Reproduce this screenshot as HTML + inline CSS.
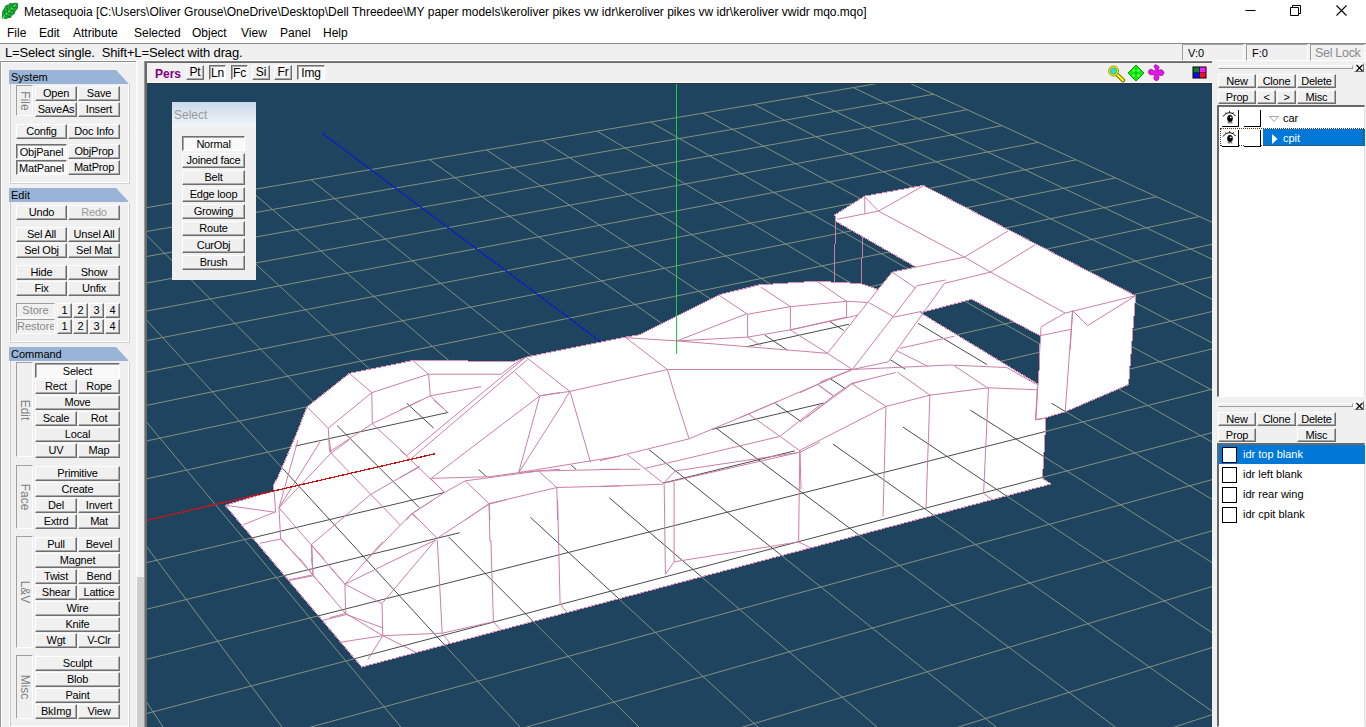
<!DOCTYPE html>
<html><head><meta charset="utf-8"><title>Metasequoia</title>
<style>
*{box-sizing:border-box}
html,body{margin:0;padding:0}
body{width:1366px;height:727px;overflow:hidden;background:#f0f0f0;font-family:"Liberation Sans",sans-serif;font-size:11px;color:#000;position:relative}
#title{position:absolute;left:0;top:0;width:1366px;height:23px;background:#fff}
#leaf{position:absolute;left:0px;top:0px}
#ttext{position:absolute;left:24px;top:5px;font-size:12px;white-space:nowrap;letter-spacing:0px}
#wc{position:absolute;left:1226px;top:0}
#menu{position:absolute;left:0;top:23px;width:1366px;height:20px;background:#fff;font-size:12px}
#menu span{position:absolute;top:3px}
#status{position:absolute;left:0;top:43px;width:1366px;height:18px;background:#f0f0f0;border-top:1px solid #8a8a8a;border-bottom:1px solid #fff;font-size:12px}
#stext{position:absolute;left:5px;top:1px;white-space:nowrap;font-size:13px;letter-spacing:-0.15px}
.sb{position:absolute;top:0px;height:17px;white-space:nowrap;overflow:hidden;border:1px solid;border-color:#a0a0a0 #fff #fff #a0a0a0;padding:2px 0 0 5px;font-size:11px}
#left{position:absolute;left:0;top:0;width:144px;height:727px}
.edgeL{position:absolute;left:0;top:61px;width:144px;height:666px;border-left:1px solid #9a9a9a;border-top:1px solid #8a8a8a;box-shadow:inset 1px 1px 0 #fff}
.hd{position:absolute;left:9px;width:120px;height:14px;background:#99b4d6;clip-path:polygon(0 0,107px 0,120px 14px,0 14px);font-size:11px;line-height:14px;padding-left:2px}
.grp{position:absolute;left:9px;width:120px;border:1px solid #fff;border-top:none;box-shadow:inset 1px 0 0 #c8c8c8, 1px 1px 0 #d0d0d0;background:#f0f0f0}
.vl{position:absolute;left:16px;width:17px;border:1px solid;border-color:#a0a0a0 #fff #fff #a0a0a0;color:#808080}
.vl span{position:absolute;left:50%;top:50%;transform:translate(-50%,-50%) rotate(90deg);white-space:nowrap;font-size:12px}
.b{position:absolute;background:#f0f0f0;border:1px solid;border-color:#fff #6e6e6e #6e6e6e #fff;box-shadow:inset -1px -1px 0 #a8a8a8;text-align:center;line-height:13px;font-size:11px;white-space:nowrap;overflow:hidden;letter-spacing:-0.2px}
#vtool .b{font-size:12px;line-height:12px;overflow:visible}
#vtool .b.p{line-height:14px}
.b.p{background:#f9f9f9;border-color:#6e6e6e #fff #fff #6e6e6e;box-shadow:inset 1px 1px 0 #a8a8a8;line-height:15px}
.b.dis{color:#9a9a9a}
.b.rb{line-height:12px;font-size:11px}
.lbl{position:absolute;border:1px solid;border-color:#a0a0a0 #fff #fff #a0a0a0;color:#8a8a8a;text-align:center;line-height:13px;font-size:11px;overflow:hidden}
#sbtrack{position:absolute;left:136px;top:61px;width:8px;height:666px;background:#f0f0f0;border-left:2px solid #fafafa}
#sbthumb{position:absolute;left:137px;top:577px;width:7px;height:150px;background:#cdcdcd}
#vframe{position:absolute;left:144px;top:61px;width:1068px;height:666px;background:#6a6a6a;border-left:1px solid #9a9a9a;border-top:1px solid #808080}
#vtool{position:absolute;left:147px;top:63px;width:1065px;height:20px;background:#f0f0f0;border-bottom:1px solid #fafafa}
#pers{position:absolute;left:8px;top:4px;font-weight:bold;color:#800080;font-size:12px}
#view{position:absolute;left:147px;top:83px;width:1065px;height:644px;background:#1f445f;overflow:hidden;border-top:1px solid #2d343a}
#right{position:absolute;left:1212px;top:0;width:154px;height:727px}
.grip{position:absolute;left:6px;width:135px;height:4px;border:1px solid;border-color:#fff #a0a0a0 #a0a0a0 #fff}
.xb{position:absolute;left:142px;width:10px;height:9px;border:1px solid;border-color:#fff #6e6e6e #6e6e6e #fff;background:#f0f0f0}
.xb svg{position:absolute;left:0;top:0}
.list{position:absolute;left:5px;width:148px;background:#fff;border:1px solid #fff;border-left:2px solid #696969;border-top:2px solid #696969;border-right:1px solid #e3e3e3}
.ebox{position:absolute;width:17px;height:17px;background:#fff;border-right:1px solid #000;border-bottom:1px solid #000}
.ebox svg{position:absolute;left:0;top:0}
.mbox{position:absolute;width:15px;height:16px;background:#fff;border:1px solid #000}
.lt{position:absolute;font-size:11px;white-space:nowrap}
.selrow{position:absolute;background:#0078d7}
.dots{position:absolute;border:1px dotted #5a3a10}
#selp{position:absolute;left:25px;top:18px;width:84px;height:178px;background:#f0f0f0}
#selh{position:absolute;left:0;top:0;width:84px;height:25px;background:linear-gradient(#c9d9ea,#f3f6fa);color:#9a9a9a;font-size:12px;padding:6px 0 0 2px}
</style></head>
<body>
<div id="title"><svg id="leaf" width="20" height="20" viewBox="0 0 20 20"><path d="M1.800 18.800 L2.200 11.500 L4 8.500 L5.500 5.500 L8.500 4.500 L10 3 L13 3.300 L14.500 2.800 L17.800 3 L18 6.500 L17.500 9 L15.500 11 L15 13.500 L12 15.500 L11 17.800 L7.500 18.200 L6 19.200 L3.500 18.300 Z" fill="#0f8c2c"/><path d="M3 17 L3.500 11.500 L6 7 L10 4.500 L16.500 4.200 L16.800 8 L14 12.500 L10 16.500 L5 17.800 Z" fill="#1cae3a"/><path d="M2 18.600 L15.500 4.500" stroke="#56e84e" stroke-width="1.100" fill="none"/><path d="M5 15.500 L4.500 10.500 M7.500 13 L7.300 7.500 M10 10.300 L10.300 5.500 M12.500 7.700 L13.200 4 M5 15.500 L9.500 16.500 M7.500 13 L12.500 14 M10 10.300 L15 11 M12.500 7.700 L17 7.500" stroke="#0a6e22" stroke-width="0.800" fill="none"/></svg><span id="ttext">Metasequoia [C:\Users\Oliver Grouse\OneDrive\Desktop\Dell Threedee\MY paper models\keroliver pikes vw idr\keroliver pikes vw idr\keroliver vwidr mqo.mqo]</span><svg id="wc" width="140" height="22" viewBox="0 0 140 22"><path d="M19.5 10.5 H29.5" stroke="#000" stroke-width="1" fill="none"/><path d="M64.5 7.5 H72.5 V15.5 H64.5 Z M66.5 7.5 V5.5 H74.5 V13.5 H72.5" stroke="#000" stroke-width="1" fill="none"/><path d="M110.5 5.5 L120.5 15.5 M120.5 5.5 L110.5 15.5" stroke="#000" stroke-width="1.1" fill="none"/></svg></div>
<div id="menu"><span style="left:7px">File</span><span style="left:39px">Edit</span><span style="left:73px">Attribute</span><span style="left:134px">Selected</span><span style="left:192px">Object</span><span style="left:241px">View</span><span style="left:280px">Panel</span><span style="left:323px">Help</span></div>
<div id="status"><span id="stext">L=Select single.&nbsp; Shift+L=Select with drag.</span><div class="sb" style="left:1182px;width:62px">V:0</div><div class="sb" style="left:1246px;width:62px">F:0</div><div class="sb" style="left:1310px;width:55px;color:#8a8a8a;font-size:12.5px;padding:1px 0 0 4px;letter-spacing:-0.3px">Sel Lock</div></div>
<div id="left">
<div class="edgeL"></div>
<div class="grp" style="top:83px;height:100px"></div>
<div class="hd" style="top:70px">System</div>
<div class="vl" style="top:85px;height:31px"><span>File</span></div>
<div class="b" style="left:35px;top:86px;width:42px;height:15px;">Open</div>
<div class="b" style="left:78px;top:86px;width:42px;height:15px;">Save</div>
<div class="b" style="left:35px;top:102px;width:42px;height:15px;">SaveAs</div>
<div class="b" style="left:78px;top:102px;width:42px;height:15px;">Insert</div>
<div class="b" style="left:16px;top:124px;width:51px;height:15px;">Config</div>
<div class="b" style="left:68px;top:124px;width:52px;height:15px;">Doc Info</div>
<div class="b p" style="left:16px;top:144px;width:51px;height:15px;">ObjPanel</div>
<div class="b" style="left:68px;top:144px;width:52px;height:15px;">ObjProp</div>
<div class="b p" style="left:16px;top:160px;width:51px;height:15px;">MatPanel</div>
<div class="b" style="left:68px;top:160px;width:52px;height:15px;">MatProp</div>
<div class="grp" style="top:202px;height:140px"></div>
<div class="hd" style="top:188px">Edit</div>
<div class="b" style="left:16px;top:205px;width:51px;height:15px;">Undo</div>
<div class="b dis" style="left:68px;top:205px;width:52px;height:15px;">Redo</div>
<div class="b" style="left:16px;top:227px;width:51px;height:15px;">Sel All</div>
<div class="b" style="left:68px;top:227px;width:52px;height:15px;">Unsel All</div>
<div class="b" style="left:16px;top:243px;width:51px;height:15px;">Sel Obj</div>
<div class="b" style="left:68px;top:243px;width:52px;height:15px;">Sel Mat</div>
<div class="b" style="left:16px;top:265px;width:51px;height:15px;">Hide</div>
<div class="b" style="left:68px;top:265px;width:52px;height:15px;">Show</div>
<div class="b" style="left:16px;top:281px;width:51px;height:15px;">Fix</div>
<div class="b" style="left:68px;top:281px;width:52px;height:15px;">Unfix</div>
<div class="lbl" style="left:16px;top:303px;width:39px;height:15px">Store</div>
<div class="b" style="left:57px;top:303px;width:15px;height:15px;">1</div>
<div class="b" style="left:73px;top:303px;width:15px;height:15px;">2</div>
<div class="b" style="left:89px;top:303px;width:15px;height:15px;">3</div>
<div class="b" style="left:105px;top:303px;width:15px;height:15px;">4</div>
<div class="lbl" style="left:16px;top:319px;width:39px;height:15px">Restore</div>
<div class="b" style="left:57px;top:319px;width:15px;height:15px;">1</div>
<div class="b" style="left:73px;top:319px;width:15px;height:15px;">2</div>
<div class="b" style="left:89px;top:319px;width:15px;height:15px;">3</div>
<div class="b" style="left:105px;top:319px;width:15px;height:15px;">4</div>
<div class="grp" style="top:361px;height:366px"></div>
<div class="hd" style="top:347px">Command</div>
<div class="vl" style="top:362px;height:95px"><span>Edit</span></div>
<div class="vl" style="top:465px;height:64px"><span>Face</span></div>
<div class="vl" style="top:536px;height:112px"><span>L&amp;V</span></div>
<div class="vl" style="top:655px;height:64px"><span>Misc</span></div>
<div class="b p" style="left:35px;top:363px;width:85px;height:15px;">Select</div>
<div class="b" style="left:35px;top:379px;width:42px;height:15px;">Rect</div>
<div class="b" style="left:78px;top:379px;width:42px;height:15px;">Rope</div>
<div class="b" style="left:35px;top:395px;width:85px;height:15px;">Move</div>
<div class="b" style="left:35px;top:411px;width:42px;height:15px;">Scale</div>
<div class="b" style="left:78px;top:411px;width:42px;height:15px;">Rot</div>
<div class="b" style="left:35px;top:427px;width:85px;height:15px;">Local</div>
<div class="b" style="left:35px;top:443px;width:42px;height:15px;">UV</div>
<div class="b" style="left:78px;top:443px;width:42px;height:15px;">Map</div>
<div class="b" style="left:35px;top:466px;width:85px;height:15px;">Primitive</div>
<div class="b" style="left:35px;top:482px;width:85px;height:15px;">Create</div>
<div class="b" style="left:35px;top:498px;width:42px;height:15px;">Del</div>
<div class="b" style="left:78px;top:498px;width:42px;height:15px;">Invert</div>
<div class="b" style="left:35px;top:514px;width:42px;height:15px;">Extrd</div>
<div class="b" style="left:78px;top:514px;width:42px;height:15px;">Mat</div>
<div class="b" style="left:35px;top:537px;width:42px;height:15px;">Pull</div>
<div class="b" style="left:78px;top:537px;width:42px;height:15px;">Bevel</div>
<div class="b" style="left:35px;top:553px;width:85px;height:15px;">Magnet</div>
<div class="b" style="left:35px;top:569px;width:42px;height:15px;">Twist</div>
<div class="b" style="left:78px;top:569px;width:42px;height:15px;">Bend</div>
<div class="b" style="left:35px;top:585px;width:42px;height:15px;">Shear</div>
<div class="b" style="left:78px;top:585px;width:42px;height:15px;">Lattice</div>
<div class="b" style="left:35px;top:601px;width:85px;height:15px;">Wire</div>
<div class="b" style="left:35px;top:617px;width:85px;height:15px;">Knife</div>
<div class="b" style="left:35px;top:633px;width:42px;height:15px;">Wgt</div>
<div class="b" style="left:78px;top:633px;width:42px;height:15px;">V-Clr</div>
<div class="b" style="left:35px;top:656px;width:85px;height:15px;">Sculpt</div>
<div class="b" style="left:35px;top:672px;width:85px;height:15px;">Blob</div>
<div class="b" style="left:35px;top:688px;width:85px;height:15px;">Paint</div>
<div class="b" style="left:35px;top:704px;width:42px;height:15px;">BkImg</div>
<div class="b" style="left:78px;top:704px;width:42px;height:15px;">View</div>
<div id="sbtrack"></div><div id="sbthumb"></div>
</div>
<div id="vframe"></div>
<div id="vtool"><span id="pers">Pers</span>
<div class="b" style="left:39px;top:2px;width:18px;height:15px;">Pt</div>
<div class="b p" style="left:62px;top:2px;width:17px;height:15px;">Ln</div>
<div class="b p" style="left:84px;top:2px;width:17px;height:15px;">Fc</div>
<div class="b" style="left:105px;top:2px;width:18px;height:15px;">Si</div>
<div class="b" style="left:127px;top:2px;width:18px;height:15px;">Fr</div>
<div class="b p" style="left:150px;top:2px;width:28px;height:15px;">Img</div>
<svg style="position:absolute;left:958px;top:1px" width="110" height="19" viewBox="1105 64 110 19">
<path d="M1117.5 75 L1123 80.3" stroke="#6b6b00" stroke-width="4" stroke-linecap="round"/><path d="M1117.5 75 L1123 80.3" stroke="#ffff00" stroke-width="2.2" stroke-linecap="round"/>
<circle cx="1113.6" cy="71" r="5" fill="#ffff00" stroke="#7a7a00" stroke-width="0.8"/><circle cx="1113.6" cy="71" r="3.2" fill="#19e3f5" stroke="#7a7a00" stroke-width="0.6"/>
<path d="M1136 65 L1144 73 L1136 81 L1128 73 Z" fill="#00f000" stroke="#0a8a0a" stroke-width="0.9"/>
<g fill="#c8ffc8"><circle cx="1133.6" cy="70.6" r="1"/><circle cx="1138.4" cy="70.6" r="1"/><circle cx="1133.6" cy="75.4" r="1"/><circle cx="1138.4" cy="75.4" r="1"/></g><circle cx="1136" cy="73" r="0.8" fill="#0a7a0a"/>
<path d="M1156 65.2 c2 0 3 1 3 2.5 c0 1 -1 2 -1 3 c2 -1 3.5 -1.5 5 0 c1.5 1.5 1 3.500 -0.500 4.500 c-1.5 0.8 -3 0 -4 -0.500 c0.500 2 0.800 4 -0.500 5.300 c-1.500 1.200 -3.500 0.500 -4 -1 c-0.500 -1.500 0.500 -3 1 -4.500 c-2 0.500 -4.500 0.800 -6 -0.700 c-1.300 -1.500 -0.500 -3.600 1 -4.300 c1.500 -0.600 3 0.200 3.500 1.500 c1 -0.500 2 -1 2.500 -1.800 c-1.200 -0.800 -2 -1.800 -1.800 -3 c0.200 -1.200 1 -1.500 1.800 -1.500 z" fill="#e415e4" stroke="#8a0a8a" stroke-width="0.7"/>
<rect x="1192.500" y="66.500" width="14" height="12" fill="#000"/><rect x="1193.5" y="67.5" width="6" height="5" fill="#0f7d2f"/><rect x="1200" y="67.5" width="5.500" height="5" fill="#ff19ff"/><rect x="1193.5" y="73" width="6" height="4.500" fill="#0a0aff"/><rect x="1200" y="73" width="5.500" height="4.500" fill="#ff0f0f"/>
</svg>
</div>
<div id="right">
<div class="grip" style="top:65px"></div><div class="xb" style="top:63px"><svg width="9" height="8" viewBox="0 0 9 8"><path d="M1.500 1 L7.500 7 M7.500 1 L1.500 7" stroke="#000" stroke-width="1.100"/></svg></div><div class="b rb" style="left:6px;top:74px;width:38px;height:14px;">New</div><div class="b rb" style="left:45px;top:74px;width:39px;height:14px;">Clone</div><div class="b rb" style="left:85px;top:74px;width:39px;height:14px;">Delete</div><div class="b rb" style="left:6px;top:90px;width:38px;height:14px;">Prop</div><div class="b rb" style="left:45px;top:90px;width:19px;height:14px;">&lt;</div><div class="b rb" style="left:65px;top:90px;width:19px;height:14px;">&gt;</div><div class="b rb" style="left:85px;top:90px;width:39px;height:14px;">Misc</div>
<div class="list" style="top:105px;height:292px"><div class="ebox" style="left:3px;top:3px"><svg width="15" height="15" viewBox="0 0 15 15"><path d="M1 6.500 C3 3.500 6 2.500 8 2.800 C10.500 3 12.500 4.500 13.500 6" stroke="#000" stroke-width="1" fill="none"/><path d="M3.500 2.500 L4.500 3.800 M7.500 1 L7.500 2.600 M11.500 2.200 L10.600 3.500" stroke="#000" stroke-width="0.8"/><ellipse cx="8" cy="8.500" rx="2.800" ry="3.600" fill="#000"/><circle cx="8.800" cy="7.300" r="0.900" fill="#fff"/><path d="M5.500 12.800 H10.500" stroke="#555" stroke-width="1"/></svg></div><div class="ebox" style="left:25px;top:3px"></div><svg style="position:absolute;left:49px;top:8px" width="12" height="8" viewBox="0 0 12 8"><path d="M1.500 1.500 H10.500 L6 6.500 Z" fill="#fff" stroke="#a6a6a6" stroke-width="1"/></svg><span class="lt" style="left:64px;top:5px">car</span><div class="selrow" style="left:44px;top:22px;width:102px;height:17px"></div><div class="dots" style="left:1px;top:21px;width:144px;height:18px"></div><div class="ebox" style="left:3px;top:23px"><svg width="15" height="15" viewBox="0 0 15 15"><path d="M1 6.500 C3 3.500 6 2.500 8 2.800 C10.500 3 12.500 4.500 13.500 6" stroke="#000" stroke-width="1" fill="none"/><path d="M3.500 2.500 L4.500 3.800 M7.500 1 L7.500 2.600 M11.500 2.200 L10.600 3.500" stroke="#000" stroke-width="0.8"/><ellipse cx="8" cy="8.500" rx="2.800" ry="3.600" fill="#000"/><circle cx="8.800" cy="7.300" r="0.900" fill="#fff"/><path d="M5.500 12.800 H10.500" stroke="#555" stroke-width="1"/></svg></div><div class="ebox" style="left:25px;top:23px"></div><svg style="position:absolute;left:52px;top:26px" width="8" height="12" viewBox="0 0 8 12"><path d="M1 1 L6.500 6 L1 11 Z" fill="#fff"/></svg><span class="lt" style="left:64px;top:25px;color:#fff">cpit</span></div>
<div class="grip" style="top:403px"></div><div class="xb" style="top:401px"><svg width="9" height="8" viewBox="0 0 9 8"><path d="M1.500 1 L7.500 7 M7.500 1 L1.500 7" stroke="#000" stroke-width="1.100"/></svg></div><div class="b rb" style="left:6px;top:412px;width:38px;height:14px;">New</div><div class="b rb" style="left:45px;top:412px;width:39px;height:14px;">Clone</div><div class="b rb" style="left:85px;top:412px;width:39px;height:14px;">Delete</div><div class="b rb" style="left:6px;top:428px;width:38px;height:14px;">Prop</div><div class="b rb" style="left:85px;top:428px;width:39px;height:14px;">Misc</div>
<div class="list" style="top:443px;height:284px">
<div class="selrow" style="left:0px;top:0px;width:146px;height:19px"></div>
<div class="mbox" style="left:3px;top:2px"></div><span class="lt" style="left:24px;top:3px;color:#fff">idr top blank</span>
<div class="mbox" style="left:3px;top:22px"></div><span class="lt" style="left:24px;top:23px;">idr left blank</span>
<div class="mbox" style="left:3px;top:42px"></div><span class="lt" style="left:24px;top:43px;">idr rear wing</span>
<div class="mbox" style="left:3px;top:62px"></div><span class="lt" style="left:24px;top:63px;">idr cpit blank</span>
</div>
</div>
<div id="view">
<svg id="vsvg" width="1065" height="644" viewBox="147 83 1065 644" style="position:absolute;left:0;top:-1px" shape-rendering="crispEdges">
<g stroke="#83907f" stroke-width="1" shape-rendering="geometricPrecision">
<line x1="1915.0" y1="545.7" x2="901.4" y2="79.4" />
<line x1="1854.4" y1="566.7" x2="853.3" y2="87.6" />
<line x1="1791.8" y1="588.3" x2="804.2" y2="95.9" />
<line x1="1727.0" y1="610.7" x2="754.0" y2="104.4" />
<line x1="1659.9" y1="633.9" x2="702.8" y2="113.1" />
<line x1="1590.5" y1="657.9" x2="650.4" y2="122.0" />
<line x1="1518.5" y1="682.8" x2="597.0" y2="131.1" />
<line x1="1443.8" y1="708.6" x2="542.3" y2="140.4" />
<line x1="1366.4" y1="735.4" x2="486.4" y2="149.9" />
<line x1="1285.9" y1="763.3" x2="429.3" y2="159.6" />
<line x1="1115.3" y1="822.2" x2="311.0" y2="179.7" />
<line x1="1024.8" y1="853.5" x2="249.8" y2="190.1" />
<line x1="930.5" y1="886.1" x2="187.1" y2="200.8" />
<line x1="832.2" y1="920.1" x2="123.0" y2="211.7" />
<line x1="729.7" y1="955.6" x2="57.3" y2="222.8" />
<line x1="622.5" y1="992.6" x2="-10.1" y2="234.3" />
<line x1="510.5" y1="1031.4" x2="-79.1" y2="246.0" />
<line x1="393.3" y1="1071.9" x2="-149.8" y2="258.0" />
<line x1="270.4" y1="1114.4" x2="-222.3" y2="270.3" />
<line x1="141.6" y1="1158.9" x2="-296.7" y2="283.0" />
<line x1="1915.0" y1="545.7" x2="141.6" y2="1158.9" />
<line x1="1836.2" y1="509.5" x2="101.9" y2="1079.6" />
<line x1="1762.0" y1="475.3" x2="65.4" y2="1006.7" />
<line x1="1691.8" y1="443.1" x2="31.8" y2="939.6" />
<line x1="1625.4" y1="412.5" x2="0.8" y2="877.5" />
<line x1="1562.4" y1="383.5" x2="-28.0" y2="820.0" />
<line x1="1502.7" y1="356.0" x2="-54.7" y2="766.6" />
<line x1="1445.9" y1="329.9" x2="-79.7" y2="716.7" />
<line x1="1391.8" y1="305.0" x2="-103.0" y2="670.2" />
<line x1="1340.3" y1="281.3" x2="-124.8" y2="626.6" />
<line x1="1244.3" y1="237.2" x2="-164.5" y2="547.3" />
<line x1="1199.5" y1="216.5" x2="-182.6" y2="511.1" />
<line x1="1156.6" y1="196.8" x2="-199.7" y2="476.9" />
<line x1="1115.5" y1="177.9" x2="-215.8" y2="444.7" />
<line x1="1076.2" y1="159.8" x2="-231.1" y2="414.1" />
<line x1="1038.4" y1="142.4" x2="-245.6" y2="385.2" />
<line x1="1002.1" y1="125.7" x2="-259.4" y2="357.7" />
<line x1="967.2" y1="109.7" x2="-272.4" y2="331.5" />
<line x1="933.7" y1="94.2" x2="-284.9" y2="306.7" />
<line x1="901.4" y1="79.4" x2="-296.7" y2="283.0" />
<line x1="1202.3" y1="792.2" x2="676.7" y2="398.6" />
<line x1="1291.2" y1="258.7" x2="676.7" y2="398.6" />
</g>
<line x1="676.7" y1="398.6" x2="322.5" y2="133.5" stroke="#0c1cc8" stroke-width="1.2"/>
<line x1="676.4" y1="83" x2="676.4" y2="398" stroke="#1ccc46" stroke-width="1.2"/>
<defs><clipPath id="carclip"><path d="M225 505.2 L273.4 491 L273.4 485 L277 479 L294.7 438 L307 407 L349.4 373.4 L413 360.5 L436.5 360.8 L514.5 361.3 L526.6 357 L622.1 337.7 L640 334.7 L719.2 294.8 L759 284.9 L816.3 281.2 L861.1 283.6 L878 289.5 L892.2 272.1 L915.8 267.1 L835.4 221 L834.9 214.8 L864.8 196.1 L923.3 185.4 L1135.6 295.7 L1128.6 384.5 L1065.2 411.8 L1046 417.5 L1042.5 478.3 L1051.2 484 L361.7 667 Z M920.5 312.8 L971.8 299.3 L1040.3 335.9 L1038.5 384.5 Z" clip-rule="evenodd"/></clipPath></defs>
<path d="M225 505.2 L273.4 491 L273.4 485 L277 479 L294.7 438 L307 407 L349.4 373.4 L413 360.5 L436.5 360.8 L514.5 361.3 L526.6 357 L622.1 337.7 L640 334.7 L719.2 294.8 L759 284.9 L816.3 281.2 L861.1 283.6 L878 289.5 L892.2 272.1 L915.8 267.1 L835.4 221 L834.9 214.8 L864.8 196.1 L923.3 185.4 L1135.6 295.7 L1128.6 384.5 L1065.2 411.8 L1046 417.5 L1042.5 478.3 L1051.2 484 L361.7 667 Z M920.5 312.8 L971.8 299.3 L1040.3 335.9 L1038.5 384.5 Z" fill="#ffffff" fill-rule="evenodd" stroke="#d68fb6" stroke-width="1"/>
<g stroke="#4a4c4b" stroke-width="1" shape-rendering="geometricPrecision" clip-path="url(#carclip)">
<line x1="279.5" y1="465.0" x2="444.7" y2="645.1" />
<line x1="337.2" y1="425.7" x2="419.5" y2="507.8" />
<line x1="448.5" y1="536.8" x2="533.3" y2="621.6" />
<line x1="406.7" y1="403.2" x2="433.6" y2="428.0" />
<line x1="478.6" y1="469.5" x2="486.5" y2="476.7" />
<line x1="530.4" y1="517.3" x2="618.9" y2="598.8" />
<line x1="571.1" y1="465.1" x2="576.0" y2="469.4" />
<line x1="609.4" y1="497.9" x2="701.6" y2="576.9" />
<line x1="648.9" y1="449.6" x2="781.6" y2="555.6" />
<line x1="716.5" y1="428.4" x2="858.9" y2="535.1" />
<line x1="775.4" y1="403.5" x2="800.6" y2="421.3" />
<line x1="833.0" y1="444.1" x2="933.8" y2="515.2" />
<line x1="764.8" y1="335.2" x2="787.2" y2="350.0" />
<line x1="830.9" y1="379.1" x2="844.9" y2="388.4" />
<line x1="902.8" y1="427.0" x2="1006.4" y2="495.9" />
<line x1="829.0" y1="321.1" x2="843.8" y2="330.5" />
<line x1="890.4" y1="359.8" x2="905.5" y2="369.3" />
<line x1="970.2" y1="410.1" x2="1044.5" y2="457.0" />
<line x1="918.0" y1="323.3" x2="987.0" y2="364.6" />
<line x1="1051.5" y1="403.2" x2="1072.7" y2="416.0" />
<line x1="295.5" y1="446.0" x2="448.3" y2="412.4" />
<line x1="746.4" y1="346.8" x2="849.2" y2="324.2" />
<line x1="252.4" y1="537.8" x2="444.0" y2="492.6" />
<line x1="712.2" y1="429.4" x2="823.6" y2="403.1" />
<line x1="284.2" y1="575.6" x2="459.8" y2="532.7" />
<line x1="663.1" y1="483.1" x2="794.6" y2="450.9" />
<line x1="318.1" y1="615.9" x2="1082.8" y2="422.0" />
<line x1="354.2" y1="658.8" x2="1052.9" y2="474.6" />
</g>
<g stroke="#cb7fa6" stroke-width="1" fill="none" shape-rendering="geometricPrecision" clip-path="url(#carclip)">
<polyline points="349.4,373.4 371.8,392.6 372.3,423.7"/>
<polyline points="371.8,392.6 428.6,374.2 412.9,360.5"/>
<polyline points="428.6,374.2 430.3,395.8 372.3,423.7"/>
<polyline points="428.6,374.2 501.3,374.2 515.0,363.5 526.2,356.8"/>
<polyline points="430.3,395.8 481.4,386.6"/>
<polyline points="430.3,395.8 447.0,412.0"/>
<polyline points="307.1,407.0 328.3,428.2 371.8,392.6"/>
<polyline points="328.3,428.2 329.5,451.8 372.3,423.7"/>
<polyline points="372.3,423.7 406.7,455.6"/>
<polyline points="406.7,455.6 524.9,357.7"/>
<polyline points="410.4,459.3 527.4,359.7"/>
<polyline points="515.0,372.2 539.8,395.8 560.0,392.6"/>
<polyline points="539.8,395.8 518.7,472.5 560.0,469.3"/>
<polyline points="539.8,395.8 431.6,478.0"/>
<polyline points="274.0,489.5 275.7,512.6"/>
<polyline points="279.0,507.7 298.0,440.0"/>
<polyline points="279.0,507.7 320.2,441.7"/>
<polyline points="279.0,507.7 331.0,453.2 329.3,440.0"/>
<polyline points="331.0,453.2 349.1,440.0"/>
<polyline points="331.0,453.2 400.3,525.0"/>
<polyline points="279.0,507.7 280.6,539.0 260.0,543.2"/>
<polyline points="280.6,539.0 299.6,559.3"/>
<polyline points="279.0,507.7 311.2,544.8 312.0,559.3"/>
<polyline points="311.2,544.8 370.6,494.5 419.3,466.4"/>
<polyline points="311.2,544.8 324.4,559.3"/>
<polyline points="411.8,513.4 367.3,559.3"/>
<polyline points="330.0,567.2 344.9,584.2 345.7,613.4 330.0,617.6"/>
<polyline points="344.9,584.2 382.8,541.7"/>
<polyline points="344.9,584.2 435.6,540.0"/>
<polyline points="344.9,584.2 382.0,603.5 382.8,635.7"/>
<polyline points="382.0,603.5 435.6,540.0"/>
<polyline points="345.7,613.4 382.8,635.7 442.2,633.2 493.4,621.7"/>
<polyline points="382.8,635.7 339.9,642.3"/>
<polyline points="382.8,635.7 368.0,659.3"/>
<polyline points="382.8,635.7 415.8,652.2"/>
<polyline points="437.3,540.0 442.2,633.2"/>
<polyline points="490.9,540.0 493.4,621.7 500.8,629.9"/>
<polyline points="442.2,633.2 450.5,644.0"/>
<polyline points="412.4,513.2 433.0,500.0"/>
<polyline points="412.4,513.2 437.1,538.3"/>
<polyline points="437.1,538.3 489.1,504.1 505.6,500.0"/>
<polyline points="489.1,504.1 489.9,541.3"/>
<polyline points="557.6,500.0 560.1,604.0 566.7,612.2"/>
<polyline points="400.0,409.9 421.5,400.0"/>
<polyline points="433.8,400.0 447.9,412.4"/>
<polyline points="405.8,455.3 444.6,492.4"/>
<polyline points="400.0,450.3 405.8,455.3"/>
<polyline points="400.0,477.6 419.8,466.8"/>
<polyline points="430.5,478.4 489.9,476.7 518.8,472.6 620.0,456.1"/>
<polyline points="518.8,472.6 565.0,400.0"/>
<polyline points="572.5,400.0 590.6,462.4"/>
<polyline points="430.5,478.4 444.6,492.4"/>
<polyline points="444.6,492.4 465.2,480.9 538.6,471.0 620.0,469.3"/>
<polyline points="465.2,480.9 489.1,503.6 556.8,487.5 620.0,485.8"/>
<polyline points="538.6,471.0 556.8,487.5 557.6,520.0"/>
<polyline points="489.1,503.6 489.9,520.0"/>
<polyline points="489.1,503.6 465.2,520.0"/>
<polyline points="444.6,492.4 411.6,513.9 406.6,520.0"/>
<polyline points="411.6,513.9 419.0,520.0"/>
<polyline points="676.7,400.0 689.1,438.8"/>
<polyline points="600.0,460.7 689.1,438.8 748.5,414.0 777.4,401.7"/>
<polyline points="627.2,454.5 644.6,468.5 663.5,483.3"/>
<polyline points="600.0,469.3 640.4,469.3"/>
<polyline points="600.0,486.6 663.5,484.2"/>
<polyline points="644.6,468.5 779.1,436.6"/>
<polyline points="663.5,483.3 675.1,471.0"/>
<polyline points="675.1,471.0 796.4,452.8"/>
<polyline points="663.5,483.3 800.5,452.0"/>
<polyline points="748.5,414.0 779.9,436.3 800.5,451.2"/>
<polyline points="779.9,436.3 820.0,405.0"/>
<polyline points="800.5,452.0 820.0,442.1"/>
<polyline points="664.2,484.6 665.4,574.2 674.1,561.8"/>
<polyline points="674.1,482.1 674.1,561.8 798.6,541.9 813.5,549.3"/>
<polyline points="799.8,451.0 798.6,541.9"/>
<polyline points="800.0,392.7 827.3,380.0"/>
<polyline points="818.6,384.9 833.2,395.6"/>
<polyline points="800.0,422.0 851.8,383.9 864.5,380.0"/>
<polyline points="851.8,383.9 886.0,406.4"/>
<polyline points="800.0,450.3 886.0,406.4 929.9,395.2 988.5,387.8 1037.4,389.8"/>
<polyline points="886.0,406.4 883.0,516.7"/>
<polyline points="929.9,395.2 926.0,508.0"/>
<polyline points="988.5,387.8 983.6,493.3 992.4,500.1"/>
<polyline points="1037.4,386.8 1035.4,420.0 1046.1,418.1"/>
<polyline points="800.0,451.3 801.0,489.4"/>
<polyline points="719.0,295.2 747.6,314.3 790.4,306.6 760.9,287.2"/>
<polyline points="747.6,314.3 747.6,337.1"/>
<polyline points="790.4,306.6 790.4,329.9"/>
<polyline points="790.4,306.6 846.6,301.3 818.0,281.9"/>
<polyline points="846.6,301.3 846.6,317.1 790.4,329.9"/>
<polyline points="846.6,301.3 868.4,302.5"/>
<polyline points="677.0,340.9 747.6,337.1 790.4,329.9 858.0,315.2"/>
<polyline points="747.6,337.1 760.9,345.7"/>
<polyline points="790.4,329.9 827.5,353.3"/>
<polyline points="677.0,340.9 827.5,353.3"/>
<polyline points="827.5,353.3 878.0,289.5"/>
<polyline points="827.5,353.3 852.3,369.5"/>
<polyline points="852.3,369.5 917.0,285.7 945.5,280.0"/>
<polyline points="852.3,369.5 888.4,361.8 926.5,308.5 944.6,283.2"/>
<polyline points="869.4,302.8 894.1,317.1 921.7,311.4"/>
<polyline points="852.3,369.5 740.0,417.6"/>
<polyline points="818.0,384.7 833.2,396.1 852.3,382.8"/>
<polyline points="833.2,396.1 806.6,417.6"/>
<polyline points="896.0,350.4 928.4,366.6"/>
<polyline points="625.9,337.7 676.9,340.9 747.3,313.5"/>
<polyline points="625.9,337.7 667.4,369.5 852.4,369.5"/>
<polyline points="526.6,357.6 569.9,391.4 667.4,369.5"/>
<polyline points="569.9,391.4 540.0,395.7"/>
<polyline points="569.9,391.4 572.6,399.9"/>
<polyline points="569.9,391.4 564.4,399.9"/>
<polyline points="667.4,369.5 676.4,399.9"/>
<polyline points="864.8,196.9 864.8,214.3"/>
<polyline points="864.8,196.9 878.5,211.1"/>
<polyline points="836.9,219.3 878.5,211.1 923.3,185.9"/>
<polyline points="878.5,211.1 964.4,257.1 1007.9,231.0"/>
<polyline points="964.4,257.1 915.8,267.1"/>
<polyline points="964.4,257.1 990.5,272.1 1035.3,244.7"/>
<polyline points="990.5,272.1 944.5,283.3"/>
<polyline points="990.5,272.1 1065.2,313.1 1135.6,295.7"/>
<polyline points="1065.2,313.1 1041.0,326.8"/>
<polyline points="1072.6,310.6 1087.6,325.6 1135.6,295.7"/>
<polyline points="1072.6,310.6 1070.1,350.0"/>
<polyline points="1041.0,335.5 1071.4,329.3"/>
<polyline points="892.2,272.1 915.8,288.2"/>
<polyline points="1041.0,327.2 1036.0,419.3 1045.3,418.1"/>
<polyline points="1072.6,311.0 1065.2,411.8"/>
<polyline points="852.4,369.5 949.4,365.0 1006.7,367.5 1036.5,384.5"/>
<polyline points="899.6,348.4 954.4,336.2"/>
<polyline points="852.4,383.2 895.7,372.5"/>
<polyline points="820.0,382.0 852.4,369.5"/>
<polyline points="954.4,365.8 988.0,388.2"/>
<polyline points="897.2,372.0 930.8,395.7"/>
<polyline points="274.7,512.2 224.9,505.2"/>
<polyline points="274.7,512.2 243.6,524.6"/>
<polyline points="299.6,558.2 313.3,575.7 288.4,580.6"/>
<polyline points="311.5,558.2 313.3,575.7"/>
<polyline points="313.3,575.7 329.4,594.3"/>
<polyline points="311.1,544.9 344.5,583.6"/>
<polyline points="281.1,538.7 312.8,574.8 346.3,614.5 383.3,628.0"/>
<polyline points="288.2,580.1 312.8,574.8"/>
<polyline points="311.9,544.9 312.8,574.8"/>
<polyline points="346.3,614.5 318.1,621.5"/>
</g>
<g stroke="#cb7fa6" stroke-width="1" fill="none"><polyline points="835.4,221 834.4,282"/><polyline points="862.8,236.5 861.1,284"/></g>
<line x1="147" y1="520.3" x2="435.2" y2="453.7" stroke="#c81414" stroke-width="1.3"/>
<line x1="676.4" y1="290" x2="676.4" y2="354" stroke="#1ccc46" stroke-width="1.2"/>
</svg>
<div id="selp"><div id="selh">Select</div>
<div class="b p" style="left:10px;top:34px;width:63px;height:15px">Normal</div>
<div class="b" style="left:10px;top:51px;width:63px;height:15px">Joined face</div>
<div class="b" style="left:10px;top:68px;width:63px;height:15px">Belt</div>
<div class="b" style="left:10px;top:85px;width:63px;height:15px">Edge loop</div>
<div class="b" style="left:10px;top:102px;width:63px;height:15px">Growing</div>
<div class="b" style="left:10px;top:119px;width:63px;height:15px">Route</div>
<div class="b" style="left:10px;top:136px;width:63px;height:15px">CurObj</div>
<div class="b" style="left:10px;top:153px;width:63px;height:15px">Brush</div>
</div>
</div>
</body></html>
